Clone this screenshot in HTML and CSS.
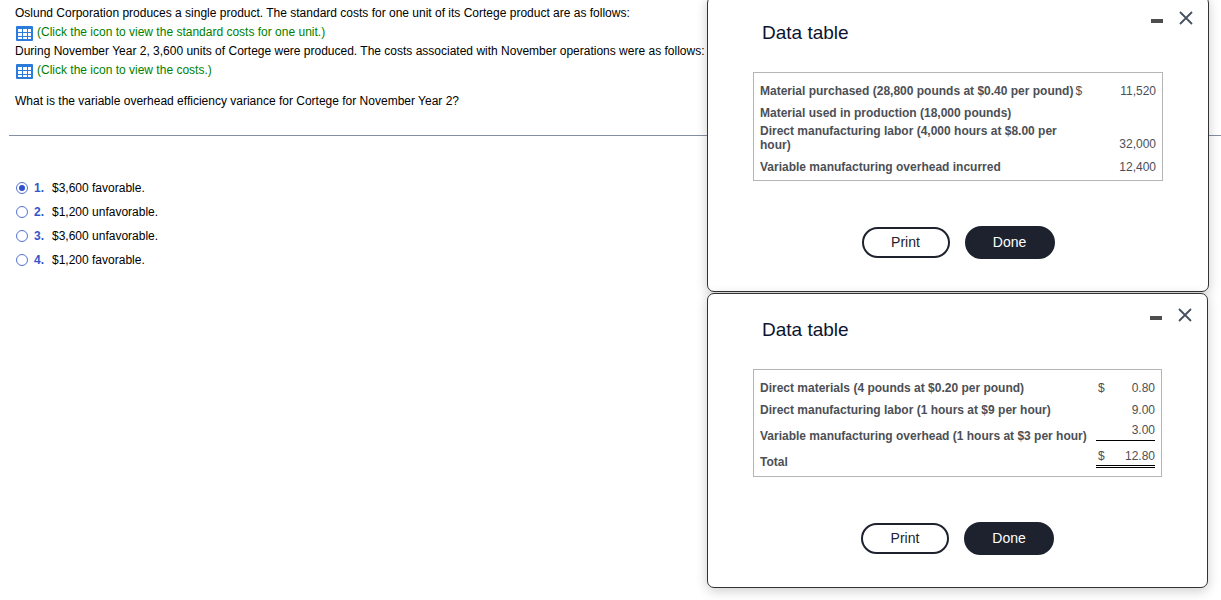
FILE: index.html
```html
<!DOCTYPE html>
<html lang="en">
<head>
<meta charset="utf-8">
<title>Variable overhead efficiency variance</title>
<link rel="stylesheet" href="styles.css">
</head>
<body>
<svg class="sprite" aria-hidden="true">
  <symbol id="grid" viewBox="0 0 17 15">
    <rect width="17" height="15" rx="1" fill="#2b7bdc"/>
    <path d="M2 3h4v3H2zM7 3h4v3H7zM12 3h3v3h-3zM2 7h4v3H2zM7 7h4v3H7zM12 7h3v3h-3zM2 11h4v2H2zM7 11h4v2H7zM12 11h3v2h-3z" fill="#fff"/>
  </symbol>
  <symbol id="close" viewBox="0 0 14 14">
    <path d="M1 1l12 12M13 1L1 13" fill="none" stroke="#46505f" stroke-width="1.800"/>
  </symbol>
</svg>
<main class="question">
  <section class="prompt">
    <p>Oslund Corporation produces a single product. The standard costs for one unit of its Cortege product are as follows:</p>
    <a class="data-link" href="#standard"><svg class="grid-icon"><use href="#grid"/></svg>(Click the icon to view the standard costs for one unit.)</a>
    <p>During November Year 2, 3,600 units of Cortege were produced. The costs associated with November operations were as follows:</p>
    <a class="data-link" href="#costs"><svg class="grid-icon"><use href="#grid"/></svg>(Click the icon to view the costs.)</a>
    <p class="ask">What is the variable overhead efficiency variance for Cortege for November Year 2?</p>
  </section>
  <hr class="rule">
  <form class="choices">
    <label class="choice"><input type="radio" name="answer" checked><b>1.</b><span>$3,600 favorable.</span></label>
    <label class="choice"><input type="radio" name="answer"><b>2.</b><span>$1,200 unfavorable.</span></label>
    <label class="choice"><input type="radio" name="answer"><b>3.</b><span>$3,600 unfavorable.</span></label>
    <label class="choice"><input type="radio" name="answer"><b>4.</b><span>$1,200 favorable.</span></label>
  </form>
</main>
<div class="windows">
  <section class="dialog" id="costs" role="dialog" aria-labelledby="costs-title">
    <header class="dialog-header">
      <h2 class="title" id="costs-title">Data table</h2>
      <div class="controls">
        <button class="icon-button" type="button" aria-label="Minimize"><span class="minimize"></span></button>
        <button class="icon-button" type="button" aria-label="Close"><svg class="close-icon"><use href="#close"/></svg></button>
      </div>
    </header>
    <div class="frame">
      <table class="data">
        <tr class="single"><th>Material purchased (28,800 pounds at $0.40 per pound)</th><td class="currency">$</td><td class="amount">11,520</td></tr>
        <tr><th>Material used in production (18,000 pounds)</th><td></td><td></td></tr>
        <tr class="wrapped"><th>Direct manufacturing labor (4,000 hours at $8.00 per hour)</th><td></td><td class="amount">32,000</td></tr>
        <tr><th>Variable manufacturing overhead incurred</th><td></td><td class="amount">12,400</td></tr>
      </table>
    </div>
    <div class="actions">
      <button class="pill" type="button">Print</button>
      <button class="pill primary" type="button">Done</button>
    </div>
  </section>
  <section class="dialog" id="standard" role="dialog" aria-labelledby="standard-title">
    <header class="dialog-header">
      <h2 class="title" id="standard-title">Data table</h2>
      <div class="controls">
        <button class="icon-button" type="button" aria-label="Minimize"><span class="minimize"></span></button>
        <button class="icon-button" type="button" aria-label="Close"><svg class="close-icon"><use href="#close"/></svg></button>
      </div>
    </header>
    <div class="frame">
      <table class="data summed">
        <tr><th>Direct materials (4 pounds at $0.20 per pound)</th><td class="currency">$</td><td class="amount">0.80</td></tr>
        <tr><th>Direct manufacturing labor (1 hours at $9 per hour)</th><td></td><td class="amount">9.00</td></tr>
        <tr class="subtotal"><th>Variable manufacturing overhead (1 hours at $3 per hour)</th><td class="currency"><span class="ruled"></span></td><td class="amount"><span class="ruled">3.00</span></td></tr>
        <tr class="total"><th>Total</th><td class="currency"><span class="ruled">$</span></td><td class="amount"><span class="ruled">12.80</span></td></tr>
      </table>
    </div>
    <div class="actions">
      <button class="pill" type="button">Print</button>
      <button class="pill primary" type="button">Done</button>
    </div>
  </section>
</div>
</body>
</html>
```
FILE: styles.css
```css
* { box-sizing: border-box; }
body {
  margin: 0;
  background: #fff;
  color: #000;
  font: 12px/18px "Liberation Sans", Arial, sans-serif;
}
p, h2 { margin: 0; }
button { font-family: inherit; cursor: pointer; }
.sprite { position: absolute; width: 0; height: 0; }

.question { padding-top: 4px; }
.prompt { display: flex; flex-direction: column; align-items: flex-start; gap: 1px; padding: 0 15px; }
.data-link { display: flex; align-items: center; gap: 4px; color: #008000; text-decoration: none; }
.grid-icon { width: 17px; height: 15px; margin: 3px 0 0 1px; }
.ask { margin-top: 12px; }
.rule { height: 1px; margin: 25px 0 0 9px; border: 0; background: #84909f; }
.choices { display: flex; flex-direction: column; align-items: flex-start; gap: 6px; padding: 43px 16px; }
.choice { display: flex; align-items: center; }
.choice input {
  appearance: none;
  display: grid;
  place-items: center;
  width: 12px;
  height: 12px;
  margin: 0 6px 0 0;
  border: 1px solid #5672d6;
  border-radius: 50%;
}
.choice input:checked::before { content: ""; width: 6px; height: 6px; border-radius: 50%; background: #2f52cc; }
.choice b { width: 18px; color: #3355cc; }

.windows {
  position: absolute;
  top: -4px;
  right: 12px;
  display: flex;
  flex-direction: column;
  gap: 1px;
  width: 41%;
  min-width: 502px;
}
.dialog {
  padding: 11px 45px 32px;
  border: 1px solid #333;
  border-radius: 7px;
  background: #fff;
  box-shadow: 0 3px 12px rgba(0, 0, 0, .2);
}
#standard { margin-right: 1px; }
.dialog-header { display: flex; justify-content: space-between; align-items: flex-start; margin-right: -33px; }
.controls { display: flex; align-items: center; gap: 9px; }
.icon-button { display: grid; place-items: center; width: 20px; height: 20px; padding: 0; border: 0; background: none; }
.minimize { width: 12px; height: 4px; margin-top: 6px; background: #4d4d4d; }
.close-icon { width: 14px; height: 14px; }
.title { margin: 14px 9px 28px; color: #0b1430; font-size: 19px; line-height: 22px; font-weight: 400; }
.frame { padding: 7px 6px 2px; border: 1px solid #b5b5b5; color: #4c4f55; }
.data { width: 100%; border-collapse: collapse; line-height: 14px; }
.data th, .data td { height: 22px; padding: 0; }
.data th { text-align: left; }
.data .single th { white-space: nowrap; }
.data .amount { width: 75px; padding-bottom: 1px; text-align: right; }
.data .currency { width: 9px; padding: 0 0 1px 2px; }
.data .wrapped > * { height: 32px; vertical-align: top; padding-bottom: 4px; }
.data .wrapped .amount { vertical-align: bottom; padding-bottom: 5px; }
.summed .amount { width: 45px; }
.summed .currency { width: 14px; padding-left: 0; text-indent: 2px; }
.summed .subtotal > * { height: 28px; vertical-align: top; }
.summed .total > * { height: 25px; vertical-align: top; }
.summed .subtotal th { padding-top: 8px; }
.summed .total th { padding-top: 6px; }
.ruled { display: block; height: 18px; border-bottom: 1px solid #000; }
.subtotal .ruled { height: 20px; padding-top: 2px; }
.total .ruled { height: 19px; border-bottom: 3px double #000; }
.actions { display: flex; justify-content: center; align-items: center; gap: 15px; margin-top: 45px; }
.pill { min-width: 88px; height: 31px; padding: 0 24px 1px; border: 2px solid #1d222e; border-radius: 17px; background: #fff; color: #1d222e; font-size: 14px; }
.primary { min-width: 90px; height: 33px; background: #1d222e; color: #fff; }
```
